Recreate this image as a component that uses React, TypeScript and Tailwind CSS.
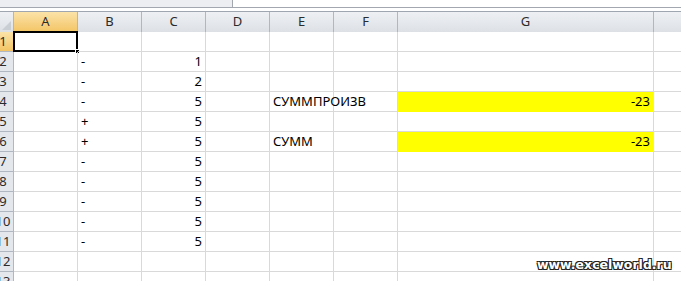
import React from "react";

const cols = ["A", "B", "C", "D", "E", "F", "G", "H"];

type Cell = { text?: string; align?: "left" | "right"; fill?: boolean };
type Row = Record<string, Cell>;

const rows: Row[] = [
  {},
  { B: { text: "-" }, C: { text: "1", align: "right" } },
  { B: { text: "-" }, C: { text: "2", align: "right" } },
  {
    B: { text: "-" },
    C: { text: "5", align: "right" },
    E: { text: "СУММПРОИЗВ" },
    G: { text: "-23", align: "right", fill: true },
  },
  { B: { text: "+" }, C: { text: "5", align: "right" } },
  {
    B: { text: "+" },
    C: { text: "5", align: "right" },
    E: { text: "СУММ" },
    G: { text: "-23", align: "right", fill: true },
  },
  { B: { text: "-" }, C: { text: "5", align: "right" } },
  { B: { text: "-" }, C: { text: "5", align: "right" } },
  { B: { text: "-" }, C: { text: "5", align: "right" } },
  { B: { text: "-" }, C: { text: "5", align: "right" } },
  { B: { text: "-" }, C: { text: "5", align: "right" } },
  {},
  {},
];

const grid = "grid w-[760px] grid-cols-[14px_64px_64px_64px_64px_64px_64px_256px_64px]";

export default function App() {
  return (
    <div className="relative w-[681px] h-[281px] overflow-hidden bg-white font-['Noto_Sans',sans-serif] text-[13px] text-black">
      {/* formula bar edge */}
      <div className="flex h-[8px]">
        <div className="w-[233px] bg-[#eceef1] border-b border-r border-[#a3a8b0]" />
        <div className="flex-1 border-b border-[#a3a8b0]" />
      </div>
      <div className="h-[3px]" />

      {/* column headers */}
      <div className={`${grid} h-[21px] border-t border-b border-[#9fa6b0]`}>
        <div className="relative overflow-hidden border-r border-[#b1b7c0] bg-gradient-to-b from-[#eef0f3] to-[#dde1e6]">
          <div className="absolute right-[2px] bottom-[2px] w-0 h-0 border-l-[9px] border-l-transparent border-b-[9px] border-b-[#c9ced5]" />
        </div>
        {cols.map((c) => (
          <div
            key={c}
            className={`flex items-center justify-center border-r border-[#b1b7c0] text-[#2b2b2b] ${
              c === "A"
                ? "bg-gradient-to-b from-[#fbe3a8] to-[#f3c463]"
                : "bg-gradient-to-b from-[#eef0f3] to-[#dde1e6]"
            }`}
          >
            {c}
          </div>
        ))}
      </div>

      {/* data rows */}
      {rows.map((r, i) => (
        <div key={i} className={`${grid} h-[20px]`}>
          <div
            className={`relative overflow-hidden border-r border-b border-[#b1b7c0] text-[#2b2b2b] ${
              i === 0 ? "bg-gradient-to-b from-[#fbe3a8] to-[#f3c463]" : "bg-[#e4e7eb]"
            }`}
          >
            <span className="absolute left-[-7px] w-[20px] top-0 h-full flex items-center justify-center">
              {i + 1}
            </span>
          </div>
          {cols.map((c) => {
            const cell = r[c];
            return (
              <div
                key={c}
                className={`relative flex items-center px-[3px] border-r border-b ${
                  cell?.fill ? "bg-[#ffff00] border-[#ffff00]" : "border-[#d9d9d9]"
                } ${cell?.align === "right" ? "justify-end" : "justify-start"}`}
              >
                {cell?.text && <span className="leading-none whitespace-nowrap">{cell.text}</span>}
                {i === 0 && c === "A" && (
                  <>
                    <div className="absolute left-[-1px] top-[-1px] w-[65px] h-[21px] border-2 border-black" />
                    <div className="absolute right-[-3px] bottom-[-3px] w-[5px] h-[5px] bg-black border border-white" />
                  </>
                )}
              </div>
            );
          })}
        </div>
      ))}

      {/* watermark */}
      <div className="absolute left-[537px] top-[259px] font-['DejaVu_Sans',sans-serif] font-bold text-[12.5px] text-white leading-none [text-shadow:-1px_-1px_0_#222,1px_-1px_0_#222,-1px_1px_0_#222,1px_1px_0_#222]">
        www.excelworld.ru
      </div>
    </div>
  );
}
